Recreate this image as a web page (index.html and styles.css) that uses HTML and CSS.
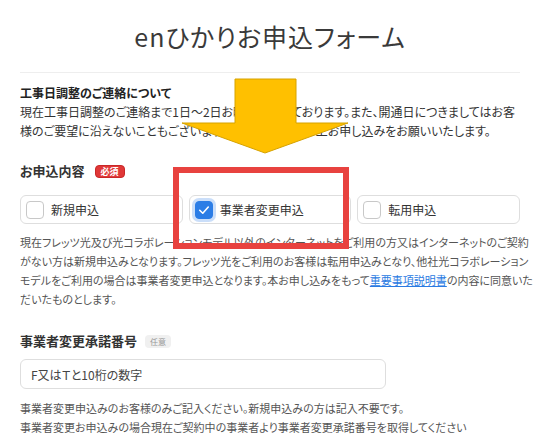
FILE: index.html
```html
<!DOCTYPE html>
<html lang="ja">
<head>
<meta charset="utf-8">
<title>enひかりお申込フォーム</title>
<link rel="stylesheet" href="styles.css">
</head>
<body>
<div class="page">
  <h1 class="title">enひかりお申込フォーム</h1>
  <hr class="rule">

  <section class="notice">
    <h2 class="notice-title">工事日調整のご連絡について</h2>
    <p class="notice-text">現在工事日調整のご連絡まで1日〜2日お時間を頂いております。また、開通日につきましてはお客<br>様のご要望に沿えないこともございますので予めご了承の上お申し込みをお願いいたします。</p>
  </section>

  <section class="field field-type">
    <div class="field-label">お申込内容<span class="badge badge-req">必須</span></div>
    <div class="options">
      <label class="option"><span class="check"></span><span class="option-text">新規申込</span></label>
      <label class="option"><span class="check check-on"><svg viewBox="0 0 18 18" width="18" height="18"><path d="M4.2 9.3 L7.6 12.6 L13.8 5.6" fill="none" stroke="#fff" stroke-width="1.8" stroke-linecap="round" stroke-linejoin="round"/></svg></span><span class="option-text">事業者変更申込</span></label>
      <label class="option"><span class="check"></span><span class="option-text">転用申込</span></label>
    </div>
    <p class="note">現在フレッツ光及び光コラボレーションモデル以外のインターネットをご利用の方又はインターネットのご契約<br>がない方は新規申込みとなります。フレッツ光をご利用のお客様は転用申込みとなり、他社光コラボレーション<br>モデルをご利用の場合は事業者変更申込となります。本お申し込みをもって<a class="link" href="#">重要事項説明書</a>の内容に同意いた<br>だいたものとします。</p>
  </section>

  <section class="field field-number">
    <div class="field-label">事業者変更承諾番号<span class="badge badge-opt">任意</span></div>
    <div class="input">F又はＴと10桁の数字</div>
    <p class="help">事業者変更申込みのお客様のみご記入ください。新規申込みの方は記入不要です。<br>事業者変更お申込みの場合現在ご契約中の事業者より事業者変更承諾番号を取得してください</p>
  </section>

  <svg class="arrow" viewBox="0 0 170 80" width="170" height="80">
    <polygon points="55,2 116,2 116,46 168,46 85,76 2,46 55,46" fill="#FFC000" stroke="#d6a200" stroke-width="1"/>
  </svg>
  <div class="highlight"></div>
</div>
</body>
</html>
```
FILE: styles.css
```css
* { box-sizing: border-box; }
html, body { margin: 0; padding: 0; background: #fff; }
body {
  font-family: "Noto Sans CJK JP", "Noto Sans", sans-serif;
  font-feature-settings: "palt";
  color: #333;
  width: 541px;
  height: 434px;
  overflow: hidden;
}
.page {
  position: relative;
  padding: 20px 21px 0 20px;
}
.title {
  margin: 0;
  font-size: 25px;
  line-height: 32px;
  font-weight: 400;
  letter-spacing: 1px;
  text-align: center;
  color: #3a3a3a;
}
.rule {
  margin: 20px 0 0 0;
  border: 0;
  height: 1px;
  background: #eeeeee;
}
.notice { margin-top: 10px; }
.notice-title {
  margin: 0;
  font-size: 12px;
  line-height: 19px;
  font-weight: 700;
  color: #222;
}
.notice-text {
  margin: 0;
  font-size: 12px;
  line-height: 19px;
  color: #333;
  white-space: nowrap;
}
.field-type { margin-top: 21px; }
.field-number { margin-top: 22px; }
.field-label {
  display: flex;
  align-items: center;
  font-size: 13px;
  line-height: 20px;
  font-weight: 700;
  color: #333;
}
.badge {
  display: inline-block;
  margin-left: 8px;
  font-size: 9px;
  line-height: 13px;
  padding: 0 5px;
  border-radius: 4px;
  font-weight: 700;
}
.badge-req {
  background: #e03838;
  color: #fff;
  margin-left: 10px;
  padding: 0 5px;
  border: 1px solid #c92828;
  line-height: 11px;
}
.badge-opt { background: #f0f0f0; color: #999; font-weight: 400; font-size: 8px; }
.options {
  display: grid;
  grid-template-columns: repeat(3, 1fr);
  gap: 6px;
  margin-top: 14px;
}
.option {
  display: flex;
  align-items: center;
  gap: 7px;
  height: 29px;
  padding-left: 5px;
  border: 1px solid #dedede;
  border-radius: 6px;
  background: #fff;
}
.check {
  width: 18px;
  height: 18px;
  border: 1px solid #c8c8c8;
  border-radius: 4px;
  background: #fff;
  display: flex;
  align-items: center;
  justify-content: center;
}
.check-on {
  background: #2b7de6;
  border-color: #2b7de6;
  box-shadow: 0 0 0 3px rgba(43, 125, 230, 0.25);
}
.check-on svg { display: block; }
.option-text {
  font-size: 12px;
  color: #333;
}
.note {
  margin: 9px 0 0 0;
  font-size: 11px;
  line-height: 19px;
  color: #555;
  white-space: nowrap;
}
.link { color: #2a7ae2; text-decoration: underline; }
.input {
  margin-top: 8px;
  width: 366px;
  height: 30px;
  border: 1px solid #dedede;
  border-radius: 6px;
  padding-left: 10px;
  display: flex;
  align-items: center;
  font-size: 12px;
  color: #444;
}
.help {
  margin: 10px 0 0 0;
  font-size: 11px;
  line-height: 19px;
  color: #555;
  white-space: nowrap;
}
.arrow {
  position: absolute;
  left: 180px;
  top: 77px;
}
.highlight {
  position: absolute;
  left: 173px;
  top: 167px;
  width: 176px;
  height: 82px;
  border: 6px solid #e8423f;
}
```
